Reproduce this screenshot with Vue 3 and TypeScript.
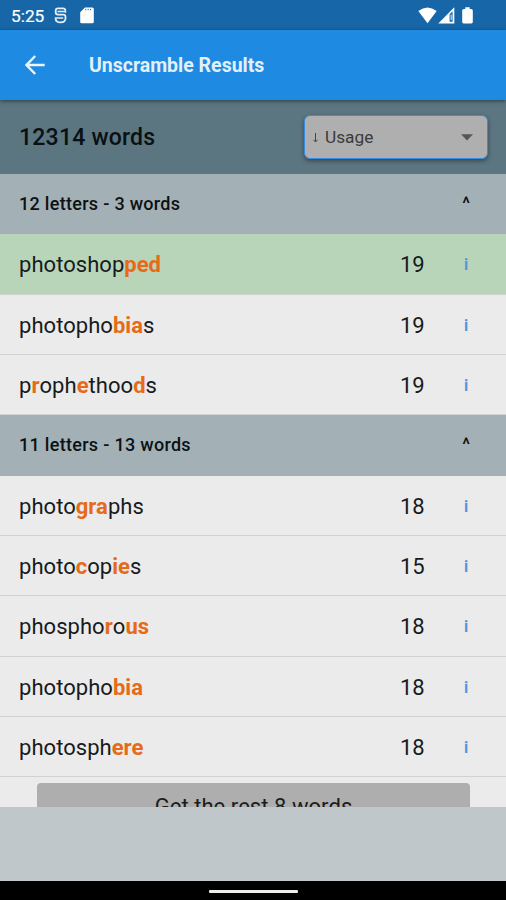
<script setup lang="ts">
interface Part { text: string; hit?: boolean }
interface Word { parts: Part[]; score: number; best?: boolean }
interface Group { title: string; words: Word[] }

// Letters wrapped in brackets are the highlighted ones.
function word(source: string, score: number, best = false): Word {
  const parts = source
    .split(/(\[[a-z]+\])/)
    .filter((chunk) => chunk.length > 0)
    .map((chunk) => chunk.startsWith('[') ? { text: chunk.slice(1, -1), hit: true } : { text: chunk })
  return { parts, score, best }
}

const groups: Group[] = [
  {
    title: '12 letters - 3 words',
    words: [word('photoshop[ped]', 19, true), word('photopho[bia]s', 19), word('p[r]oph[e]thoo[d]s', 19)],
  },
  {
    title: '11 letters - 13 words',
    words: [
      word('photo[gra]phs', 18),
      word('photo[c]op[ie]s', 15),
      word('phospho[r]o[us]', 18),
      word('photopho[bia]', 18),
      word('photosph[ere]', 18),
    ],
  },
]
</script>

<template>
  <div class="screen">
    <div class="status">
      <span class="clock">5:25</span>
      <svg class="s-icon" width="13" height="17" viewBox="0 0 13 17" fill="none" stroke="#e3eef8" stroke-width="1.8">
        <path d="M11.3 5.8V3.6Q11.3 1.3 9 1.3H4Q1.7 1.3 1.7 3.6V5.6Q1.7 7.6 4 7.6H9.2Q11.5 7.6 11.5 9.8V11.2Q11.5 15.4 6.5 15.4Q1.6 15.4 1.6 11.4" />
        <path d="M3.5 4.4H10.5M.8 11H9.2" stroke-width="1.5" />
      </svg>
      <svg class="sd" width="14" height="17" viewBox="0 0 14 17">
        <path fill="#fff" d="M5 .5H12.4Q13.8.5 13.8 2V14.8Q13.8 16.3 12.3 16.3H1.7Q.2 16.3.2 14.8V5.3Z" />
        <path stroke="#1767a8" stroke-width="1" d="M5.8 1.8V3.2M8.2 1.8V3.2M10.6 1.8V3.2" />
      </svg>
      <span class="spacer"></span>
      <svg width="19" height="17" viewBox="0 0 19 17"><path fill="#fff" d="M.3 4Q9.5-3 18.7 4L9.5 16.2Z" /></svg>
      <svg class="cell" width="17" height="17" viewBox="0 0 17 17">
        <path fill="#fff" fill-rule="evenodd" d="M.3 16.4 16.3.3V16.4ZM11.6 7.2V14.8H14.6V4.2Z" />
        <path fill="#fff" d="M12.7 7.5H13.6V13H12.7Z" />
      </svg>
      <svg class="battery" width="11" height="17" viewBox="0 0 11 17">
        <path fill="#fff" d="M3.3.3H7.7V2H9Q10.8 2 10.8 3.6V15Q10.8 16.4 9.3 16.4H1.7Q.2 16.4.2 15V3.6Q.2 2 2 2H3.3Z" />
      </svg>
    </div>
    <header class="appbar">
      <svg class="back" width="20" height="20" viewBox="0 0 20 20" fill="none" stroke="#eaf4fd" stroke-width="2.4">
        <path d="M19.7 10H2M10.2 1 1.5 10 10.2 19" />
      </svg>
      <h1>Unscramble Results</h1>
    </header>
    <div class="toolbar">
      <span class="total">12314 words</span>
      <button class="select">
        <svg width="7" height="12" viewBox="0 0 7 12" fill="none" stroke="#444" stroke-width="1"><path d="M3.5 2V10.5M1.5 8.8 3.5 11 5.5 8.8" /></svg>
        <span>Usage</span>
        <svg class="caret" width="12" height="7" viewBox="0 0 12 7"><path fill="#555" d="M0 .3H12L6 6.5Z" /></svg>
      </button>
    </div>
    <main class="list">
      <section v-for="group in groups" :key="group.title">
        <h2 class="group"><span>{{ group.title }}</span><span class="chevron">^</span></h2>
        <div v-for="(item, i) in group.words" :key="i" class="row" :class="{ best: item.best }">
          <span class="word"><span v-for="(part, j) in item.parts" :key="j" :class="{ hit: part.hit }">{{ part.text }}</span></span>
          <span class="score">{{ item.score }}</span>
          <span class="info">i</span>
        </div>
      </section>
      <button class="more">Get the rest 8 words</button>
    </main>
    <div class="banner"></div>
    <nav class="gesture"><span></span></nav>
  </div>
</template>

<style>
body { margin: 0; }
</style>

<style scoped>
.screen { width: 506px; height: 900px; display: flex; flex-direction: column; overflow: hidden; background: #000; font-family: Roboto, sans-serif; color: #171b1d; }
.screen * { box-sizing: border-box; }
.status { height: 30px; flex: none; display: flex; align-items: center; padding: 0 32px 0 11px; background: #1767a8; color: #fff; }
.clock { width: 43px; font-size: 17.3px; line-height: 30px; padding-top: 2px; -webkit-text-stroke: .2px #fff; }
.sd { margin-left: 13px; }
.spacer { flex: 1; }
.cell { margin-left: 1px; }
.battery { margin-left: 7px; margin-right: 1px; }
.appbar { position: relative; height: 70px; flex: none; display: flex; align-items: center; padding-left: 25px; background: #1e8ae1; color: #e3f0fc; box-shadow: 0 1px 4px rgba(0, 0, 0, .5); }
h1 { margin: 0 0 0 44px; padding-top: 1px; font-size: 19.5px; font-weight: 700; line-height: 24px; }
.toolbar { height: 74px; flex: none; display: flex; align-items: center; justify-content: space-between; padding: 0 18px 0 19px; background: #5b7581; }
.total { font-size: 23px; font-weight: 500; letter-spacing: .22px; color: #0a1012; }
.select { display: flex; align-items: center; width: 184px; height: 44px; padding: 0 14px 0 7px; border: 1.5px solid #388be0; border-radius: 6px; background: #afafaf; box-shadow: 0 2px 4px rgba(0, 0, 0, .4); font: 17.3px Roboto, sans-serif; color: #3b3b3b; }
.select span { margin-left: 6px; }
.caret { margin-left: auto; }
.list { height: 633px; flex: none; overflow: hidden; background: #ebebeb; }
.group { display: flex; justify-content: space-between; margin: 0; height: 60.3px; padding: 0 36px 0 19px; background: #a3b0b6; font-size: 18px; font-weight: 500; letter-spacing: .3px; line-height: 60px; color: #0c1113; }
.chevron { font-weight: 500; letter-spacing: 0; line-height: 59px; }
.row { display: grid; grid-template-columns: 1fr 58px 16px; align-items: center; height: 60.35px; padding: 2px 32px 0 19px; border-bottom: 1px solid #cfd1d2; font-size: 22px; }
.word { letter-spacing: .04px; }
.best { background: #b9d5b9; }
.hit { font-weight: 700; color: #e66a17; }
.info { font-size: 16px; font-weight: 700; text-align: center; color: #5595dc; }
.more { display: block; width: 433px; height: 46px; margin: 6px 0 0 37px; padding: 0; border: 0; border-radius: 4px; background: #aeaeae; font: 22px Roboto, sans-serif; letter-spacing: .05px; color: #1c1c1c; }
.banner { height: 74px; flex: none; background: #bfc7ca; }
.gesture { flex: 1; display: flex; justify-content: center; padding-top: 9px; }
.gesture span { width: 89px; height: 3px; margin-left: 1px; border-radius: 1px; background: #eee; }
</style>
